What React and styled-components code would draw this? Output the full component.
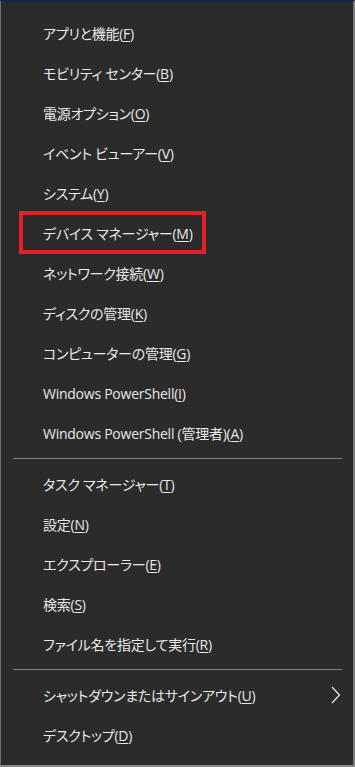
import React from "react";
import styled, { createGlobalStyle } from "styled-components";

const GlobalStyle = createGlobalStyle`
  html, body {
    margin: 0;
    padding: 0;
    background: #000;
  }
  body {
    font-family: "Open Sans", "Noto Sans CJK JP", sans-serif;
  }
`;

// menu panel
const Menu = styled.nav`
  width: 355px;
  height: 767px;
  box-sizing: border-box;
  background: #2b2b2b;
  border-top: 2px solid #10294a;
  border-left: 1px solid #6e6e6e;
  border-right: 2px solid #7a7a7a;
  border-bottom: 2px solid #8a8a8a;
  padding-top: 11px;
  display: flex;
  flex-direction: column;
`;

const Item = styled.div`
  height: 40px;
  display: flex;
  align-items: center;
  justify-content: space-between;
  padding: 0 12px 0 42px;
  color: #e8e8e8;
  font-size: 14px;
  font-feature-settings: "palt";
  letter-spacing: -0.25px;
  white-space: nowrap;
  position: relative;
`;

const Key = styled.span`
  text-decoration: underline;
  text-underline-offset: 2px;
`;

const Highlight = styled.div`
  position: absolute;
  left: 18px;
  top: -2px;
  width: 187px;
  height: 43px;
  box-sizing: border-box;
  border: 4px solid #e5202a;
  pointer-events: none;
`;

const Separator = styled.div`
  height: 11px;
  display: flex;
  align-items: center;
  padding: 0 11px 0 12px;

  &::after {
    content: "";
    flex: 1;
    height: 1px;
    background: #7f7f7f;
  }
`;

const Chevron = () => (
  <svg width="10" height="18" viewBox="0 0 10 18">
    <path d="M1 1 L8.5 9 L1 17" fill="none" stroke="#e8e8e8" strokeWidth="1.2" />
  </svg>
);

const groups = [
  [
    ["アプリと機能", "F"],
    ["モビリティ センター", "B"],
    ["電源オプション", "O"],
    ["イベント ビューアー", "V"],
    ["システム", "Y"],
    ["デバイス マネージャー", "M", true],
    ["ネットワーク接続", "W"],
    ["ディスクの管理", "K"],
    ["コンピューターの管理", "G"],
    ["Windows PowerShell", "I"],
    ["Windows PowerShell (管理者)", "A"],
  ],
  [
    ["タスク マネージャー", "T"],
    ["設定", "N"],
    ["エクスプローラー", "E"],
    ["検索", "S"],
    ["ファイル名を指定して実行", "R"],
  ],
  [
    ["シャットダウンまたはサインアウト", "U", false, true],
    ["デスクトップ", "D"],
  ],
];

const App = () => {
  return (
    <>
      <GlobalStyle />
      <Menu>
        {groups.map((group, gi) => (
          <React.Fragment key={gi}>
            {gi > 0 && <Separator />}
            {group.map(([label, key, marked, sub]) => (
              <Item key={label}>
                <span>
                  {label}(<Key>{key}</Key>)
                </span>
                {sub && <Chevron />}
                {marked && <Highlight />}
              </Item>
            ))}
          </React.Fragment>
        ))}
      </Menu>
    </>
  );
};

export default App;
